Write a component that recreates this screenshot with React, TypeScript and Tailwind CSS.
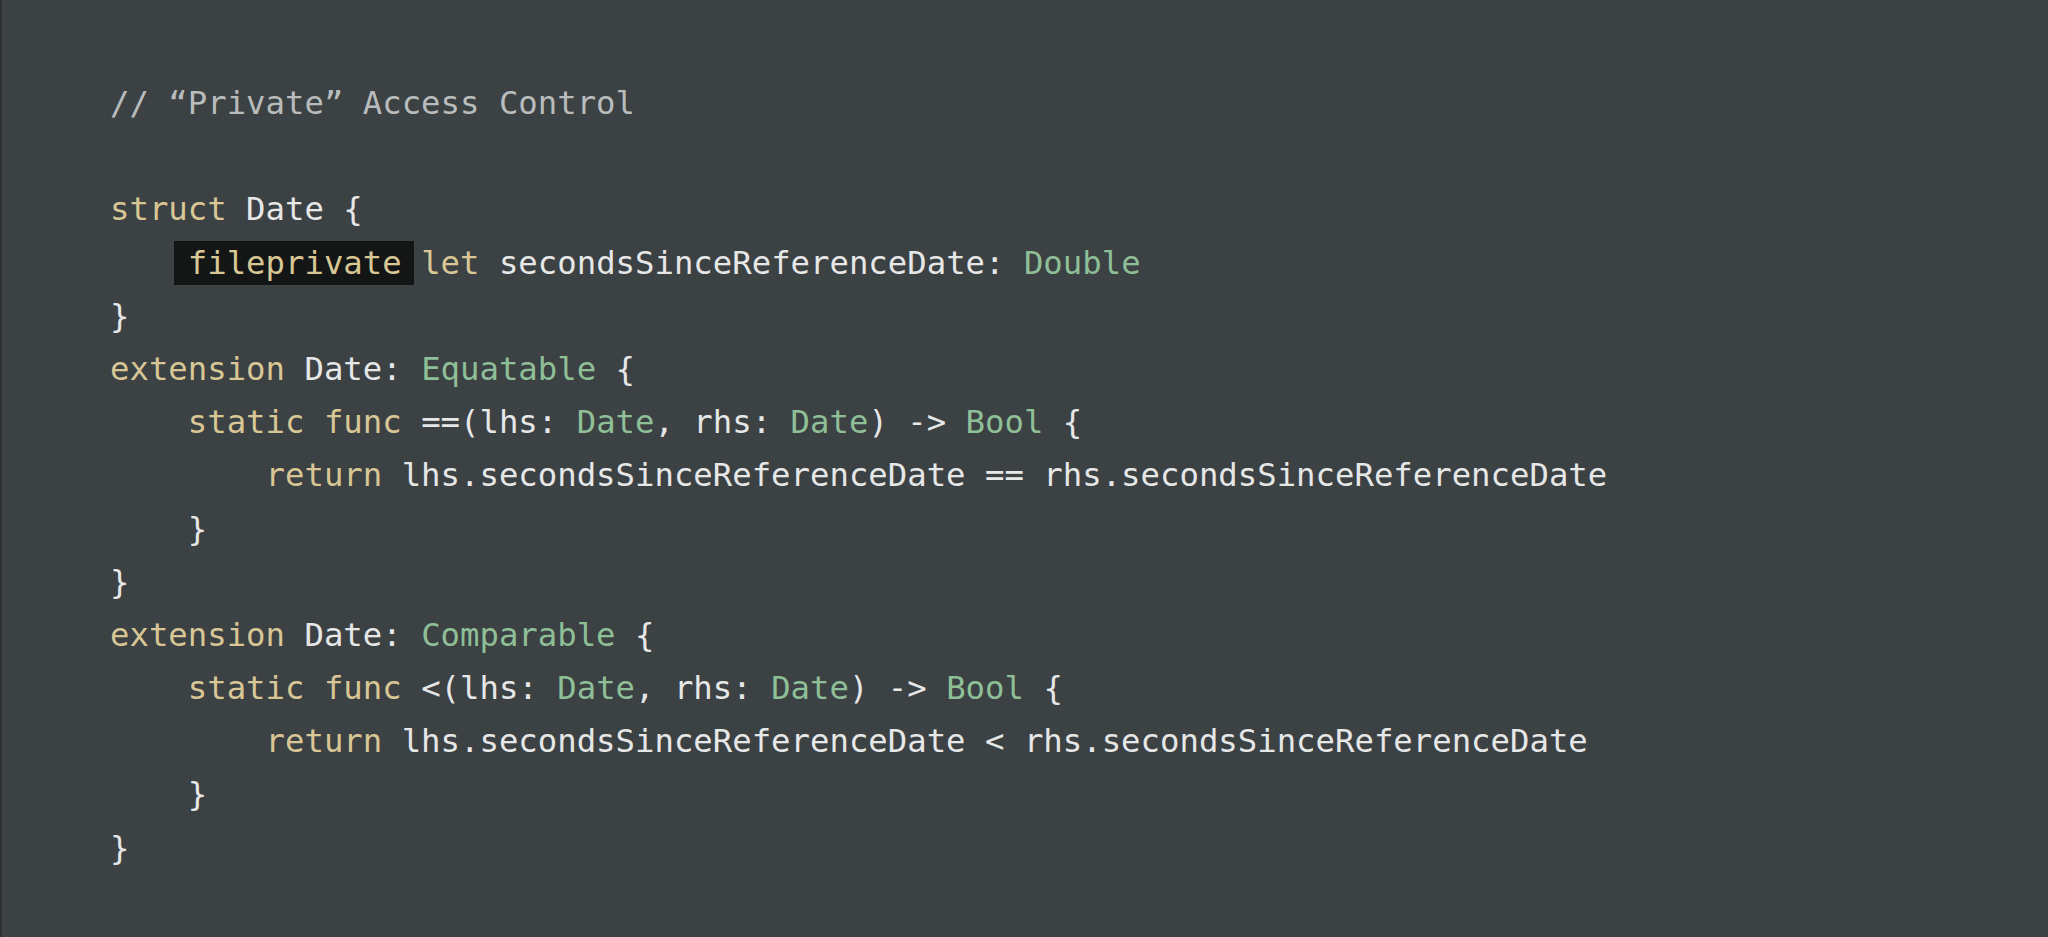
import React from "react";

const K = ({ children }: { children: React.ReactNode }) => (
  <span className="text-[#d8c795]">{children}</span>
);
const T = ({ children }: { children: React.ReactNode }) => (
  <span className="text-[#8ebf97]">{children}</span>
);

const Line = ({ children, indent = 0 }: { children?: React.ReactNode; indent?: number }) => (
  <div className="h-[53.2px] leading-[53.2px] whitespace-pre">
    {" ".repeat(indent * 4)}
    {children}
  </div>
);

export default function App() {
  return (
    <div className="w-[2048px] h-[937px] flex bg-[#3c4144] overflow-hidden">
      <div className="w-[2px] h-full bg-[#2c3033]" />
      <div
        className="flex-1 pl-[108px] pt-[77px] text-[32.3px] text-[#e6e7e7]"
        style={{ fontFamily: '"DejaVu Sans Mono", "Liberation Mono", monospace' }}
      >
        <Line>
          <span className="text-[#b8bcbc]">// “Private” Access Control</span>
        </Line>
        <Line />
        <Line>
          <K>struct</K> Date {"{"}
        </Line>
        <Line indent={1}>
          <span className="bg-[#141515] text-[#d8c795] pl-[14px] -ml-[14px] pr-[12px] -mr-[12px] py-[3px]">fileprivate</span>{" "}
          <K>let</K> secondsSinceReferenceDate: <T>Double</T>
        </Line>
        <Line>{"}"}</Line>
        <Line>
          <K>extension</K> Date: <T>Equatable</T> {"{"}
        </Line>
        <Line indent={1}>
          <K>static</K> <K>func</K> ==(lhs: <T>Date</T>, rhs: <T>Date</T>) -&gt; <T>Bool</T> {"{"}
        </Line>
        <Line indent={2}>
          <K>return</K> lhs.secondsSinceReferenceDate == rhs.secondsSinceReferenceDate
        </Line>
        <Line indent={1}>{"}"}</Line>
        <Line>{"}"}</Line>
        <Line>
          <K>extension</K> Date: <T>Comparable</T> {"{"}
        </Line>
        <Line indent={1}>
          <K>static</K> <K>func</K> &lt;(lhs: <T>Date</T>, rhs: <T>Date</T>) -&gt; <T>Bool</T> {"{"}
        </Line>
        <Line indent={2}>
          <K>return</K> lhs.secondsSinceReferenceDate &lt; rhs.secondsSinceReferenceDate
        </Line>
        <Line indent={1}>{"}"}</Line>
        <Line>{"}"}</Line>
      </div>
    </div>
  );
}
